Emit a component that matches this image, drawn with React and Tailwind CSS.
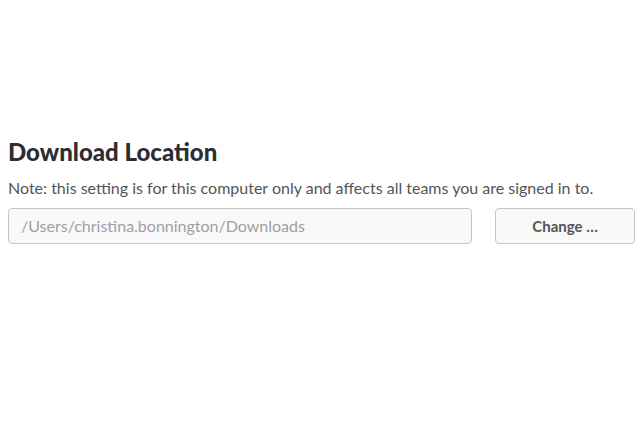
export default function App() {
  return (
    <div className="w-[640px] h-[426px] bg-white font-['Lato',sans-serif] text-[#2c2d30] px-2 pt-[136px]">
      <h2 className="text-[24px] font-black leading-[32px]">Download Location</h2>
      <p className="text-[16px] leading-[22px] text-[#555459] mt-[9px]">
        Note: this setting is for this computer only and affects all teams you are signed in to.
      </p>
      <div className="flex items-center gap-[23px] mt-[9px]">
        <div className="w-[464px] shrink-0 h-9 flex items-center px-3 border border-[#c5c5c5] rounded bg-[#f9f9f9] text-[16px] text-[#9e9ea6]">
          /Users/christina.bonnington/Downloads
        </div>
        <button className="w-[140px] shrink-0 h-9 border border-[#c5c5c5] rounded bg-[#f9f9f9] text-[15px] font-bold text-[#555459]">
          Change …
        </button>
      </div>
    </div>
  );
}
